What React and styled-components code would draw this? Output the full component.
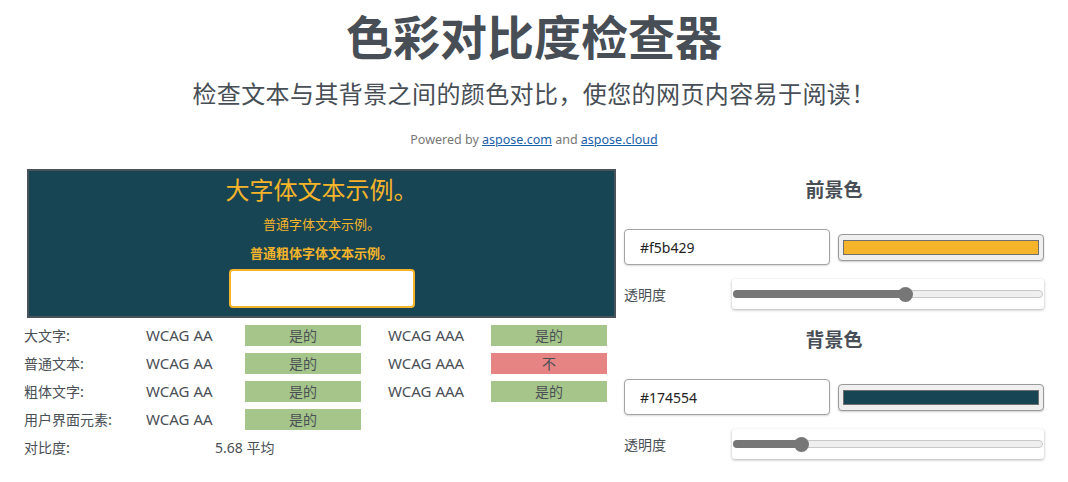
import React from "react";
import styled, { createGlobalStyle } from "styled-components";

const FONT = `"Noto Sans", "Noto Sans CJK SC", sans-serif`;

const Global = createGlobalStyle`
  html, body { margin: 0; padding: 0; background: #fff; }
  body { font-family: ${FONT}; color: #4a4f55; }
  * { box-sizing: border-box; }
`;

const Page = styled.div`
  width: 1068px;
  height: 482px;
  overflow: hidden;
  display: flex;
  flex-direction: column;
  align-items: center;
`;

const Title = styled.h1`
  margin: 0;
  font-family: "Noto Sans CJK SC", sans-serif;
  font-size: 47px;
  line-height: 70px;
  font-weight: 700;
  color: #474e55;
`;

const Subtitle = styled.h2`
  margin: 8px 0 0;
  font-family: "Noto Sans CJK SC", sans-serif;
  font-size: 24px;
  line-height: 30px;
  font-weight: 400;
  letter-spacing: 0.4px;
  color: #474e55;
`;

const Powered = styled.p`
  margin: 23px 0 0;
  font-size: 12.5px;
  line-height: 18px;
  color: #777;
  a { color: #1a5ea8; text-decoration: underline; }
`;

const Main = styled.div`
  align-self: stretch;
  display: flex;
  gap: 6px;
  padding: 0 24px;
  margin-top: 20px;
`;

const Left = styled.div`
  width: 592px;
  display: flex;
  flex-direction: column;
`;

const Preview = styled.div`
  margin-left: 3px;
  height: 149px;
  background: ${(p) => p.$bg};
  border: 2px solid #4a5359;
  color: ${(p) => p.$fg};
  display: flex;
  flex-direction: column;
  align-items: center;
  font-family: "Noto Sans CJK SC", sans-serif;
`;

const LargeText = styled.div`
  margin-top: 3px;
  font-size: 24px;
  line-height: 30px;
`;

const NormalText = styled.div`
  margin-top: ${(p) => p.$mt}px;
  font-size: 13px;
  line-height: 18px;
  font-weight: ${(p) => (p.$bold ? 700 : 400)};
`;

const SampleInput = styled.input`
  margin-top: 7px;
  width: 186px;
  height: 39px;
  border: 2px solid ${(p) => p.$fg};
  border-radius: 4px;
  background: #fff;
  outline: none;
`;

const Results = styled.div`
  margin-top: 7px;
  display: grid;
  grid-template-columns: 122px 99px 116px 27px 103px 116px;
  grid-auto-rows: 21px;
  row-gap: 7px;
  align-items: center;
  font-size: 14px;
  color: #4a4f55;
`;

const Label = styled.div`
  grid-column: 1;
  font-family: "Noto Sans CJK SC", sans-serif;
  line-height: 21px;
`;

const Level = styled.div`
  grid-column: ${(p) => p.$col};
  font-size: 15px;
  line-height: 21px;
`;

const Badge = styled.div`
  grid-column: ${(p) => p.$col};
  height: 21px;
  line-height: 21px;
  text-align: center;
  font-family: "Noto Sans CJK SC", sans-serif;
  background: ${(p) => (p.$pass ? "#a5c58a" : "#e68383")};
  color: #4a4f55;
`;

const Ratio = styled.div`
  grid-column: 2 / span 3;
  padding-left: 69px;
  line-height: 21px;
  font-size: 14px;
  font-family: "Noto Sans", "Noto Sans CJK SC", sans-serif;
`;

const Right = styled.div`
  width: 422px;
  padding-left: 2px;
  display: flex;
  flex-direction: column;
`;

const SectionTitle = styled.h3`
  margin: ${(p) => p.$mt}px 0 0;
  text-align: center;
  font-family: "Noto Sans CJK SC", sans-serif;
  font-size: 19px;
  line-height: 40px;
  font-weight: 700;
  color: #474e55;
`;

const ColorRow = styled.div`
  margin-top: 20px;
  display: flex;
  align-items: center;
  gap: 8px;
`;

const HexInput = styled.input`
  width: 206px;
  height: 36px;
  border: 1px solid #a3a3a3;
  border-radius: 4px;
  padding: 0 15px;
  font-family: ${FONT};
  font-size: 14px;
  color: #222;
  box-shadow: 0 1px 2px rgba(0, 0, 0, 0.15);
  outline: none;
`;

const Swatch = styled.div`
  width: 206px;
  height: 27px;
  background: #efefef;
  border: 1px solid #9a9a9a;
  border-radius: 4px;
  padding: 5px 4px;
  box-shadow: 0 1px 2px rgba(0, 0, 0, 0.2);
`;

const SwatchFill = styled.div`
  height: 100%;
  background: ${(p) => p.$color};
  border: 1px solid #6f6f6f;
`;

const SliderRow = styled.div`
  margin-top: 14px;
  display: flex;
  align-items: center;
`;

const SliderLabel = styled.div`
  width: 108px;
  font-family: "Noto Sans CJK SC", sans-serif;
  font-size: 14px;
  color: #4a4f55;
`;

const SliderBox = styled.div`
  width: 312px;
  height: 30px;
  background: #fff;
  border-radius: 3px;
  box-shadow: 0 1px 3px rgba(0, 0, 0, 0.3);
  display: flex;
  align-items: center;
  padding: 0 1px;
`;

const Track = styled.div`
  position: relative;
  flex: 1;
  height: 8px;
  border-radius: 4px;
  background: #efefef;
  border: 1px solid #c8c8c8;
`;

const Fill = styled.div`
  position: absolute;
  left: -1px;
  top: -1px;
  bottom: -1px;
  border-radius: 4px;
  background: #777;
`;

const Thumb = styled.div`
  position: absolute;
  top: 50%;
  width: 15px;
  height: 15px;
  margin: -7.5px 0 0 -7.5px;
  border-radius: 50%;
  background: #777;
`;

function Slider({ value }) {
  const pct = `${value * 100}%`;
  return (
    <SliderBox>
      <Track>
        <Fill style={{ width: pct }} />
        <Thumb style={{ left: pct }} />
      </Track>
    </SliderBox>
  );
}

function ColorSection({ title, hex, opacity, mt }) {
  return (
    <>
      <SectionTitle $mt={mt}>{title}</SectionTitle>
      <ColorRow>
        <HexInput defaultValue={hex} />
        <Swatch>
          <SwatchFill $color={hex} />
        </Swatch>
      </ColorRow>
      <SliderRow>
        <SliderLabel>透明度</SliderLabel>
        <Slider value={opacity} />
      </SliderRow>
    </>
  );
}

const rows = [
  { label: "大文字:", aa: true, aaa: true },
  { label: "普通文本:", aa: true, aaa: false },
  { label: "粗体文字:", aa: true, aaa: true },
  { label: "用户界面元素:", aa: true },
];

export default function App() {
  const fg = "#f5b429";
  const bg = "#174554";
  return (
    <>
      <Global />
      <Page>
        <Title>色彩对比度检查器</Title>
        <Subtitle>检查文本与其背景之间的颜色对比，使您的网页内容易于阅读！</Subtitle>
        <Powered>
          Powered by <a href="#">aspose.com</a> and <a href="#">aspose.cloud</a>
        </Powered>
        <Main>
          <Left>
            <Preview $bg={bg} $fg={fg}>
              <LargeText>大字体文本示例。</LargeText>
              <NormalText $mt={11}>普通字体文本示例。</NormalText>
              <NormalText $mt={11} $bold>普通粗体字体文本示例。</NormalText>
              <SampleInput $fg={fg} />
            </Preview>
            <Results>
              {rows.map((r) => (
                <React.Fragment key={r.label}>
                  <Label>{r.label}</Label>
                  <Level $col={2}>WCAG AA</Level>
                  <Badge $col={3} $pass={r.aa}>{r.aa ? "是的" : "不"}</Badge>
                  {r.aaa !== undefined && (
                    <>
                      <Level $col={5}>WCAG AAA</Level>
                      <Badge $col={6} $pass={r.aaa}>{r.aaa ? "是的" : "不"}</Badge>
                    </>
                  )}
                </React.Fragment>
              ))}
              <Label>对比度:</Label>
              <Ratio>5.68 平均</Ratio>
            </Results>
          </Left>
          <Right>
            <ColorSection title="前景色" hex={fg} opacity={0.557} mt={0} />
            <ColorSection title="背景色" hex={bg} opacity={0.22} mt={10} />
          </Right>
        </Main>
      </Page>
    </>
  );
}
